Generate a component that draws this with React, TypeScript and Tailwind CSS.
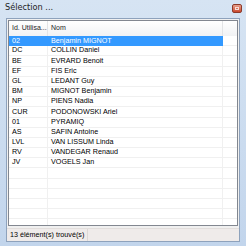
const rows: [string, string][] = [
  ['02', 'Benjamin MIGNOT'],
  ['DC', 'COLLIN Daniel'],
  ['BE', 'EVRARD Benoit'],
  ['EF', 'FIS Eric'],
  ['GL', 'LEDANT Guy'],
  ['BM', 'MIGNOT Benjamin'],
  ['NP', 'PIENS Nadia'],
  ['CUR', 'PODONOWSKI Ariel'],
  ['01', 'PYRAMIQ'],
  ['AS', 'SAFIN Antoine'],
  ['LVL', 'VAN LISSUM Linda'],
  ['RV', 'VANDEGAR Renaud'],
  ['JV', 'VOGELS Jan'],
];

const emptyRows = 6;

export default function App() {
  return (
    <div className="flex h-[246px] w-[246px] flex-col bg-gradient-to-b from-[#d6e4f3] to-[#c2d5ec] font-['Liberation_Sans',sans-serif] text-[#000]">
      {/* title bar */}
      <div className="flex h-[18px] shrink-0 items-start justify-between pl-[5px] pr-[4px] pt-[2px]">
        <span className="font-['DejaVu_Sans',sans-serif] text-[8.2px] leading-[11px] text-[#1e1e1e]">Sélection ...</span>
        <div className="mt-[2px] flex h-[9px] w-[10px] items-center justify-center rounded-[2px] border border-[#8c3a2a] bg-gradient-to-b from-[#e8a08c] to-[#c9462c]">
          <div className="h-[3px] w-[4px] border border-[#f6ddd6]" />
        </div>
      </div>

      {/* client area */}
      <div className="mx-[6px] mb-[4px] flex min-h-0 flex-1 flex-col border border-[#8ea2bc] bg-[#f0f0f0]">
        <div className="m-[1px] mb-[2px] flex min-h-0 flex-1 flex-col border border-[#828790] bg-white">
          <div className="flex h-[15px] shrink-0 whitespace-nowrap bg-gradient-to-b from-white to-[#f1f2f4] text-[7px] text-[#1e1e1e]">
            <div className="flex w-[39px] items-center overflow-hidden border-r border-[#e3e4e6] pl-[3px]">Id. Utilisa...</div>
            <div className="flex flex-1 items-center border-r border-[#e3e4e6] pl-[3px]">Nom</div>
            <div className="w-[14px]" />
          </div>
          <div className="flex flex-1 flex-col overflow-hidden whitespace-nowrap text-[7.2px]">
            {rows.map(([id, name], i) => (
              <div key={id} className="flex h-[10.2px] shrink-0 items-center">
                <div className={i === 0 ? 'flex h-full w-[39px] items-center bg-[#3399ff] pl-[3px] text-white' : 'flex h-full w-[39px] items-center border-b border-r border-[#f0f0f0] pl-[3px]'}>{id}</div>
                <div className={i === 0 ? 'flex h-full flex-1 items-center bg-[#3399ff] pl-[3px] text-white' : 'flex h-full flex-1 items-center border-b border-r border-[#f0f0f0] pl-[3px]'}>{name}</div>
                <div className="h-full w-[14px] border-b border-[#f0f0f0]" />
              </div>
            ))}
            {Array.from({ length: emptyRows }).map((_, i) => (
              <div key={i} className="flex h-[10.2px] shrink-0">
                <div className="h-full w-[39px] border-b border-r border-[#f0f0f0]" />
                <div className="h-full flex-1 border-b border-r border-[#f0f0f0]" />
                <div className="h-full w-[14px] border-b border-[#f0f0f0]" />
              </div>
            ))}
          </div>
        </div>
        {/* status bar */}
        <div className="flex h-[13px] shrink-0 items-center whitespace-nowrap border-t border-[#e2dedc] bg-[#efebea] text-[7.2px]">
          <div className="flex h-full items-center border-r border-[#dcd8d6] pl-[3px] pr-[3px]">13 élément(s) trouvé(s)</div>
        </div>
      </div>
    </div>
  );
}
